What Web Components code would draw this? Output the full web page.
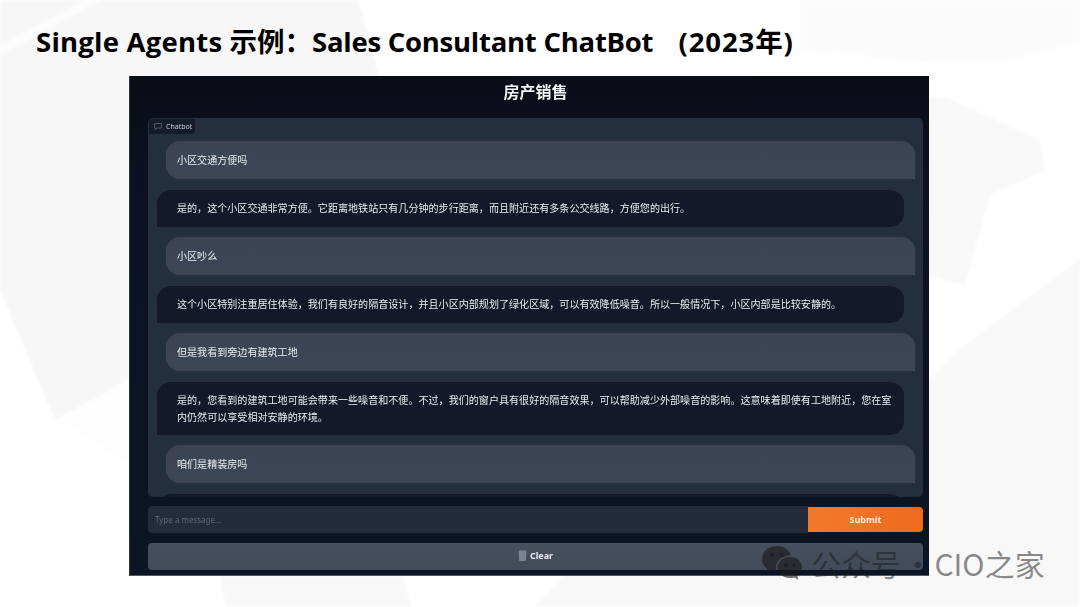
<!DOCTYPE html>
<html lang="zh">
<head>
<meta charset="utf-8">
<title>Sales Consultant ChatBot</title>
<style>
  html, body { margin: 0; padding: 0; background: #fff; }
  body { width: 1080px; height: 607px; overflow: hidden; font-family: "Noto Sans", "Noto Sans CJK SC", sans-serif; }
  .wide { letter-spacing: .23px; }
  .tight { letter-spacing: -.25px; }
  .year { margin-left: 18px; letter-spacing: .9px; }
</style>
</head>
<body>
<slide-page>
  <slide-title slot="title"><span class="wide">Single Agents</span> 示例：<span class="tight">Sales Consultant ChatBot</span> <span class="year">(2023年)</span></slide-title>
  <sales-app slot="shot" heading="房产销售">
    <chat-bubble from="user">小区交通方便吗</chat-bubble>
    <chat-bubble from="bot">是的，这个小区交通非常方便。它距离地铁站只有几分钟的步行距离，而且附近还有多条公交线路，方便您的出行。</chat-bubble>
    <chat-bubble from="user">小区吵么</chat-bubble>
    <chat-bubble from="bot">这个小区特别注重居住体验，我们有良好的隔音设计，并且小区内部规划了绿化区域，可以有效降低噪音。所以一般情况下，小区内部是比较安静的。</chat-bubble>
    <chat-bubble from="user">但是我看到旁边有建筑工地</chat-bubble>
    <chat-bubble from="bot">是的，您看到的建筑工地可能会带来一些噪音和不便。不过，我们的窗户具有很好的隔音效果，可以帮助减少外部噪音的影响。这意味着即使有工地附近，您在室内仍然可以享受相对安静的环境。</chat-bubble>
    <chat-bubble from="user">咱们是精装房吗</chat-bubble>
    <chat-bubble from="bot"></chat-bubble>
  </sales-app>
  <wechat-mark slot="mark">公众号 · CIO之家</wechat-mark>
</slide-page>

<script>
class SlidePage extends HTMLElement {
  connectedCallback() {
    this.attachShadow({ mode: 'open' });
    this.shadowRoot.innerHTML = `
      <style>
        :host {
          display: flex;
          flex-direction: column;
          position: relative;
          width: 1080px;
          height: 607px;
          overflow: hidden;
          background: #fff;
        }
        .bg { position: absolute; left: 0; top: 0; filter: blur(1.5px); }
        .top { position: relative; height: 76px; padding-left: 36px; box-sizing: border-box; }
        .shot { position: relative; padding-left: 129px; }
      </style>
      <svg class="bg" width="1080" height="607" viewBox="0 0 1080 607">
        <!-- top left sheet -->
        <polygon points="-5,-5 357,-5 379,76 400,200 129,380 55,420 0,290 -5,290" fill="#f7f7f7"/>
        <polygon points="-5,47 95,-5 112,-5 -5,58" fill="#fcfcfc"/>
        <polygon points="62,420 129,378 129,465" fill="#fdfdfd"/>
        <!-- right side shapes -->
        <polygon points="800,-5 1085,-5 1085,40 1000,62 925,62 800,50" fill="#fbfbfb"/>
        <polygon points="925,97 945,97 1040,140 1045,170 990,195 965,285 925,275" fill="#f8f8f8"/>
        <polygon points="530,612 563,576 800,500 965,345 1085,255 1085,612" fill="#f8f8f8"/>
        <!-- under the panel -->
        <polygon points="220,576 403,576 413,612 226,612" fill="#f8f8f8"/>
      </svg>
      <div class="top"><slot name="title"></slot></div>
      <div class="shot"><slot name="shot"></slot></div>
      <slot name="mark"></slot>
    `;
  }
}
customElements.define('slide-page', SlidePage);

class SlideTitle extends HTMLElement {
  connectedCallback() {
    this.attachShadow({ mode: 'open' });
    this.shadowRoot.innerHTML = `
      <style>
        :host {
          display: block;
          padding-top: 22px;
          font: 700 27.5px/40px "Open Sans", "Noto Sans CJK SC", sans-serif;
          color: #000;
          white-space: nowrap;
        }
      </style>
      <slot></slot>
    `;
  }
}
customElements.define('slide-title', SlideTitle);

class SalesApp extends HTMLElement {
  connectedCallback() {
    this.attachShadow({ mode: 'open' });
    this.shadowRoot.innerHTML = `
      <style>
        :host {
          display: block;
          width: 800px;
          height: 500px;
          box-sizing: border-box;
          background: linear-gradient(180deg, #090d18 0%, #0b1120 20%, #0c1525 100%);
          box-shadow: inset 1px 0 #30353f, inset 0 -1px #555962;
          color: #e5e7eb;
          font-family: "Noto Sans", "Noto Sans CJK SC", sans-serif;
          padding: 0 6px 0 19px;
          overflow: hidden;
        }
        .inner { filter: blur(.3px); }
        h1 {
          margin: 0;
          height: 42px;
          font-size: 16px;
          line-height: 32px;
          font-weight: 700;
          color: #f3f4f6;
          text-align: center;
        }
        .panel {
          position: relative;
          height: 379px;
          box-sizing: border-box;
          background: #242f3e;
          border-radius: 5px;
          overflow: hidden;
        }
        .label {
          position: absolute;
          left: 1px;
          top: 1px;
          height: 15px;
          width: 46px;
          box-sizing: border-box;
          display: flex;
          align-items: center;
          gap: 4px;
          padding-left: 5px;
          background: #151b29;
          border-radius: 4px 0 4px 0;
          font-size: 7px;
          color: #c9ced6;
        }
        .log {
          display: flex;
          flex-direction: column;
          gap: 10.5px;
          padding: 23px 8px 0 9px;
        }
        .row {
          display: flex;
          margin-top: 9px;
        }
        .input {
          flex: 1;
          height: 27px;
          line-height: 27px;
          padding-left: 7px;
          background: #222c3b;
          border-radius: 4px 0 0 4px;
          font-size: 8px;
          color: #5f6877;
        }
        .submit {
          width: 115px;
          height: 25px;
          margin-top: 1px;
          line-height: 25px;
          text-align: center;
          background: linear-gradient(90deg, #f37a2b, #ee6a1f);
          border-radius: 0 4px 4px 0;
          font-size: 9px;
          font-weight: 700;
          color: #fdf1e8;
        }
        .clear {
          display: flex;
          align-items: center;
          justify-content: center;
          gap: 3px;
          height: 27px;
          box-sizing: border-box;
          padding-bottom: 2px;
          margin-top: 10px;
          background: linear-gradient(180deg, #474e5d, #434b5a);
          border-radius: 4px;
          font-size: 9px;
          font-weight: 700;
          color: #e8eaee;
        }
      </style>
      <div class="inner">
        <h1>${this.getAttribute('heading')}</h1>
        <div class="panel">
          <div class="label">
            <svg width="8" height="7" viewBox="0 0 8 7"><path d="M.5.5h7v4.5H3L1.500 6.500V5h-1z" fill="none" stroke="#5d6573" stroke-width=".8"/></svg>
            Chatbot
          </div>
          <div class="log"><slot></slot></div>
        </div>
        <div class="row">
          <div class="input">Type a message...</div>
          <div class="submit">Submit</div>
        </div>
        <div class="clear">
          <svg width="9" height="11" viewBox="0 0 9 11"><path d="M.6 1.500Q.6.500 1.600.500H7.400Q8.400.500 8.400 1.500L8 10Q8 11 7 11H2Q1 11 1 10z" fill="#7b828f"/></svg>
          Clear
        </div>
      </div>
    `;
  }
}
customElements.define('sales-app', SalesApp);

class ChatBubble extends HTMLElement {
  connectedCallback() {
    this.attachShadow({ mode: 'open' });
    this.shadowRoot.innerHTML = `
      <style>
        :host {
          display: block;
          box-sizing: border-box;
          font-size: 10.07px;
          line-height: 17px;
          color: #e9ebef;
        }
        :host([from="user"]) {
          margin: 0 0 0 9px;
          width: 749px;
          padding: 10.5px 11px;
          background: linear-gradient(180deg, #3c4454, #3d4656);
          border-radius: 14px 14px 0 14px;
        }
        :host([from="bot"]) {
          width: 747px;
          padding: 10px 10px 9px 20px;
          min-height: 37px;
          background: #141929;
          border-radius: 14px 14px 14px 0;
        }
      </style>
      <slot></slot>
    `;
  }
}
customElements.define('chat-bubble', ChatBubble);

class WechatMark extends HTMLElement {
  connectedCallback() {
    this.attachShadow({ mode: 'open' });
    this.shadowRoot.innerHTML = `
      <style>
        :host {
          position: absolute;
          left: 761px;
          top: 544px;
          display: flex;
          align-items: center;
          gap: 8px;
          height: 38px;
          font: 400 30px/38px "Noto Sans CJK SC", sans-serif;
          word-spacing: -5px;
          color: rgba(24, 24, 24, .5);
          white-space: nowrap;
        }
      </style>
      <svg width="42" height="36" viewBox="0 0 42 36">
        <path fill="rgba(24,24,24,.62)" d="M16 1C7.500 1 1 6.800 1 14c0 4 2 7.400 5.300 9.800L5 28.500l5.400-2.800c1.600.5 3.200.8 4.900.9-.4-1.200-.6-2.400-.6-3.700 0-7 6.300-12.400 14.300-12.400h1C28.400 5 22.800 1 16 1z"/>
        <path fill="rgba(24,24,24,.62)" d="M29 12c-6.900 0-12.500 4.700-12.500 10.500S22.100 33 29 33c1.500 0 2.900-.2 4.200-.6l4.300 2.400-1.100-3.900c2.900-2 4.600-4.900 4.600-8.400C41 16.700 35.900 12 29 12z"/>
        <g fill="rgba(20,20,20,.55)"><circle cx="11" cy="10" r="2"/><circle cx="21" cy="10" r="2"/><circle cx="25" cy="20" r="1.700"/><circle cx="33" cy="20" r="1.700"/></g>
      </svg>
      <slot></slot>
    `;
  }
}
customElements.define('wechat-mark', WechatMark);
</script>
</body>
</html>
